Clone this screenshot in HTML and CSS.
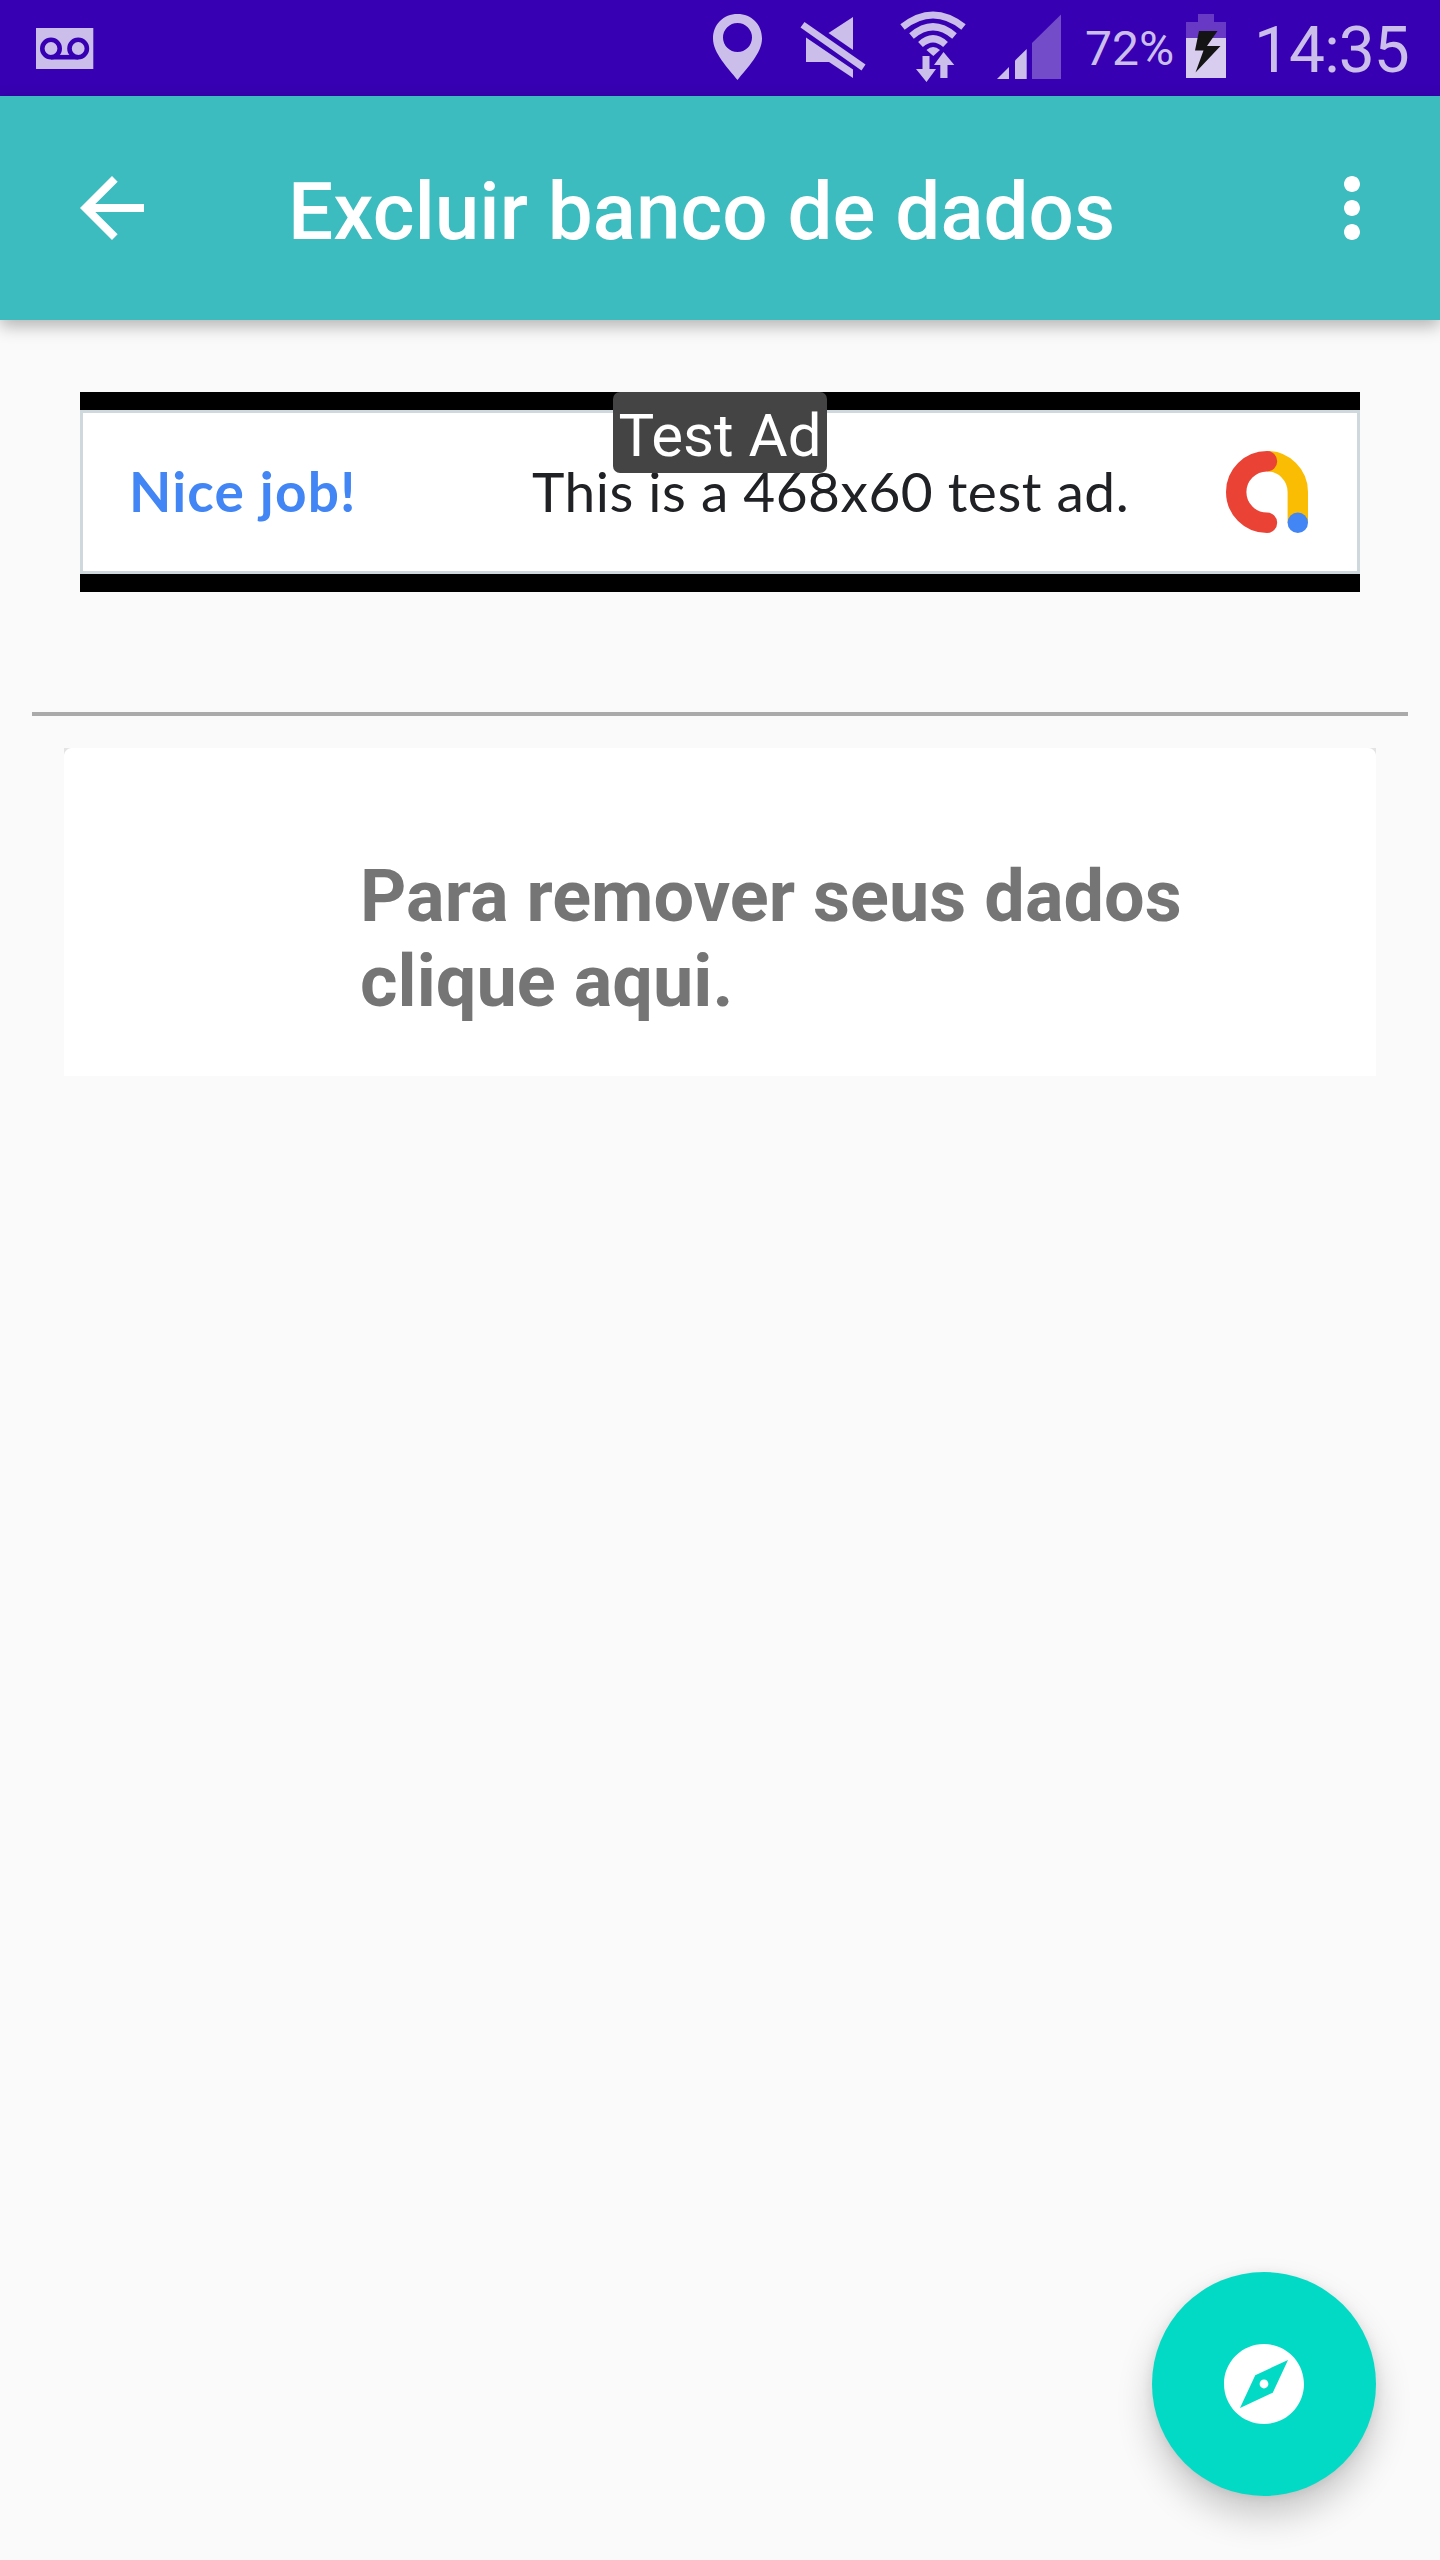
FILE: index.html
```html
<!DOCTYPE html>
<html lang="pt-BR">
<head>
<meta charset="utf-8">
<title>Excluir banco de dados</title>
<link rel="stylesheet" href="styles.css">
</head>
<body>
<div class="screen">
  <header class="status-bar">
    <svg class="voicemail" width="58" height="41" viewBox="0 0 58 41">
      <path fill="currentColor" d="M0 0h57.3v41H0z"/>
      <g fill="none" stroke="#3700b3" stroke-width="4.6">
        <circle cx="15" cy="20.5" r="8.7"/><circle cx="42.2" cy="20.5" r="8.7"/><path d="M15 29.2h27.2"/>
      </g>
    </svg>
    <div class="status-icons">
      <svg width="80" height="96" viewBox="700 0 80 96">
        <path fill="currentColor" fill-rule="evenodd" d="M737.5 15C723.5 15 713 25.500 713 39.500C713 54 728 69 737.500 81C747 69 762 54 762 39.500C762 25.500 751.500 15 737.500 15ZM737.500 24A14.500 14.500 0 1 1 737.500 53A14.500 14.500 0 1 1 737.500 24Z"/>
      </svg>
      <svg width="100" height="96" viewBox="780 0 100 96">
        <g fill="currentColor">
          <path d="M804.500 23L865.500 65.500L861.500 71.500L800.500 28.500Z"/>
          <path d="M853 18V51L828.500 34Z"/>
          <path d="M806 38.500L853 70.500V79L829 63H806Z"/>
        </g>
      </svg>
      <svg width="105" height="96" viewBox="880 0 105 96">
        <g fill="none" stroke="currentColor" stroke-width="7">
          <path d="M902.500 28Q933 4 963.500 28"/>
          <path d="M911.500 37Q933 18.500 954.500 37"/>
          <path d="M920.500 45.500Q933 34 945.500 45.500"/>
        </g>
        <g fill="currentColor">
          <path d="M926.500 51Q933 45 940 51L933.300 57Z"/>
          <path d="M922.500 57h7v13h6.500L926.500 83L916 70h6.500Z"/>
          <path d="M943.500 53L954.300 66H947.500V79H940.300V66H934Z"/>
        </g>
      </svg>
      <svg width="99" height="96" viewBox="985 0 99 96">
        <g fill="currentColor">
          <path d="M997 80L1009 68V80Z"/><path d="M1015 80V61.500L1026.700 50V80Z"/>
          <path opacity=".4" d="M1032 80V44L1061 15.500V80Z"/>
        </g>
      </svg>
      <span class="battery-level">72%</span>
      <svg width="50" height="96" viewBox="1178 0 50 96">
        <path fill="#6739c4" d="M1198 15h16v8h12v16h-40V23h12Z"/>
        <path fill="#d9cdef" d="M1186 39h40v40h-40Z"/>
        <path fill="#141414" d="M1199 32H1217.500L1207 47H1220.500L1195.500 73.500L1203.500 51.500H1195Z"/>
      </svg>
      <span class="clock">14:35</span>
    </div>
  </header>

  <nav class="toolbar">
    <svg width="96" height="96" viewBox="0 0 24 24"><path fill="currentColor" d="M20 11H7.830l5.590-5.590L12 4l-8 8 8 8 1.410-1.410L7.830 13H20v-2z"/></svg>
    <h1 class="title">Excluir banco de dados</h1>
    <svg class="more" width="96" height="96" viewBox="0 0 24 24"><path fill="currentColor" d="M12 8c1.100 0 2-.9 2-2s-.9-2-2-2-2 .9-2 2 .9 2 2 2zm0 2c-1.100 0-2 .9-2 2s.9 2 2 2 2-.9 2-2-.9-2-2-2zm0 6c-1.100 0-2 .9-2 2s.9 2 2 2 2-.9 2-2-.9-2-2-2z"/></svg>
  </nav>

  <main class="content">
    <section class="ad">
      <div class="ad-banner">
        <span class="ad-praise">Nice job!</span>
        <span class="ad-text">This is a 468x60 test ad.</span>
        <svg class="ad-logo" width="82" height="82" viewBox="0 0 82 82">
          <g fill="none" stroke-width="20.400" stroke-linecap="round">
            <path stroke="#fbbc04" stroke-linecap="butt" d="M41 10.200A30.800 30.800 0 0 1 71.800 41V72"/>
            <path stroke="#ea4335" d="M41 10.200A30.800 30.800 0 0 0 41 71.800"/>
          </g>
          <circle cx="71.800" cy="71.800" r="10.200" fill="#4285f4"/>
        </svg>
      </div>
      <span class="ad-badge">Test Ad</span>
    </section>
    <hr class="divider">
    <section class="card">
      <p class="card-text">Para remover seus dados<br>clique aqui.</p>
    </section>
  </main>

  <button class="fab" aria-label="Explorar">
    <svg width="96" height="96" viewBox="0 0 24 24"><path fill="currentColor" d="M12 10.900c-.61 0-1.100.49-1.100 1.100s.49 1.100 1.100 1.100c.61 0 1.100-.49 1.100-1.100s-.49-1.100-1.100-1.100zM12 2C6.480 2 2 6.480 2 12s4.480 10 10 10 10-4.480 10-10S17.520 2 12 2zm2.190 12.190L6 18l3.810-8.190L18 6l-3.810 8.190z"/></svg>
  </button>
</div>
</body>
</html>
```
FILE: styles.css
```css
* { box-sizing: border-box; }

body {
  margin: 0;
  font-family: Roboto, "Noto Sans", sans-serif;
  background: #fafafa;
}

svg { display: block; flex: none; }

.screen {
  position: relative;
  width: 1440px;
  height: 2560px;
  overflow: hidden;
}

.status-bar {
  display: flex;
  align-items: center;
  justify-content: space-between;
  height: 96px;
  padding: 0 20px 0 36px;
  background: #3700b3;
  color: #cbbeeb;
}

.voicemail { margin-top: 1px; }

.status-icons {
  display: flex;
  width: 720px;
  line-height: 96px;
  white-space: nowrap;
}

.battery-level {
  flex: none;
  width: 94px;
  padding: 2px 0 0 1px;
  font-size: 48px;
}

.clock {
  flex: none;
  height: 96px;
  padding: 4px 0 0 26px;
  font-size: 64px;
  letter-spacing: -.9px;
}

.toolbar {
  position: relative;
  display: flex;
  align-items: center;
  height: 224px;
  padding: 0 40px 0 64px;
  background: #3dbcc0;
  color: #fff;
  box-shadow: 0 6px 16px rgba(0, 0, 0, .29);
}

.title {
  flex: 1;
  margin: 0 0 0 128px;
  padding-top: 7px;
  font-size: 80px;
  font-weight: 500;
  line-height: 94px;
  white-space: nowrap;
}

.content { padding: 72px 32px 0; }

.ad {
  position: relative;
  height: 200px;
  margin: 0 48px;
  padding: 18px 0;
  background: #000;
}

.ad-banner {
  display: flex;
  align-items: center;
  height: 164px;
  padding: 0 49px 0 46px;
  border: 3px solid #cfd8dc;
  background: #fff;
  font-family: Lato, "Open Sans", sans-serif;
  font-size: 55px;
  line-height: 66px;
  white-space: nowrap;
}

.ad-praise {
  width: 403px;
  padding-bottom: 2px;
  font-weight: 700;
  letter-spacing: 1.2px;
  color: #4285f4;
}

.ad-text {
  padding-bottom: 2px;
  letter-spacing: .5px;
  color: #202124;
}

.ad-logo { margin-left: auto; }

.ad-badge {
  position: absolute;
  top: 0;
  left: 533px;
  width: 214px;
  height: 81px;
  border-radius: 7px;
  background: #444;
  color: #fff;
  font-size: 60px;
  line-height: 87px;
  text-align: center;
  white-space: nowrap;
}

.divider {
  height: 4px;
  margin: 120px 0 32px;
  border: 0;
  background: #aaa;
}

.card {
  height: 328px;
  margin: 0 32px;
  padding: 106px 0 0 296px;
  background:
    radial-gradient(circle at 100% 100%, #fff 7.5px, #e4e4e4 8.5px) 0 0 / 8px 8px no-repeat,
    radial-gradient(circle at 0 100%, #fff 7.5px, #e4e4e4 8.5px) 100% 0 / 8px 8px no-repeat,
    #fff;
}

.card-text {
  margin: 0;
  color: #757575;
  font-size: 72px;
  font-weight: 700;
  letter-spacing: .05px;
  line-height: 85px;
}

.fab {
  position: absolute;
  right: 64px;
  bottom: 64px;
  display: grid;
  place-items: center;
  width: 224px;
  height: 224px;
  padding: 0;
  border: 0;
  border-radius: 50%;
  background: #03dac5;
  color: #fff;
  box-shadow: 0 20px 36px rgba(0, 0, 0, .2), 0 2px 12px rgba(0, 0, 0, .08);
}
```
